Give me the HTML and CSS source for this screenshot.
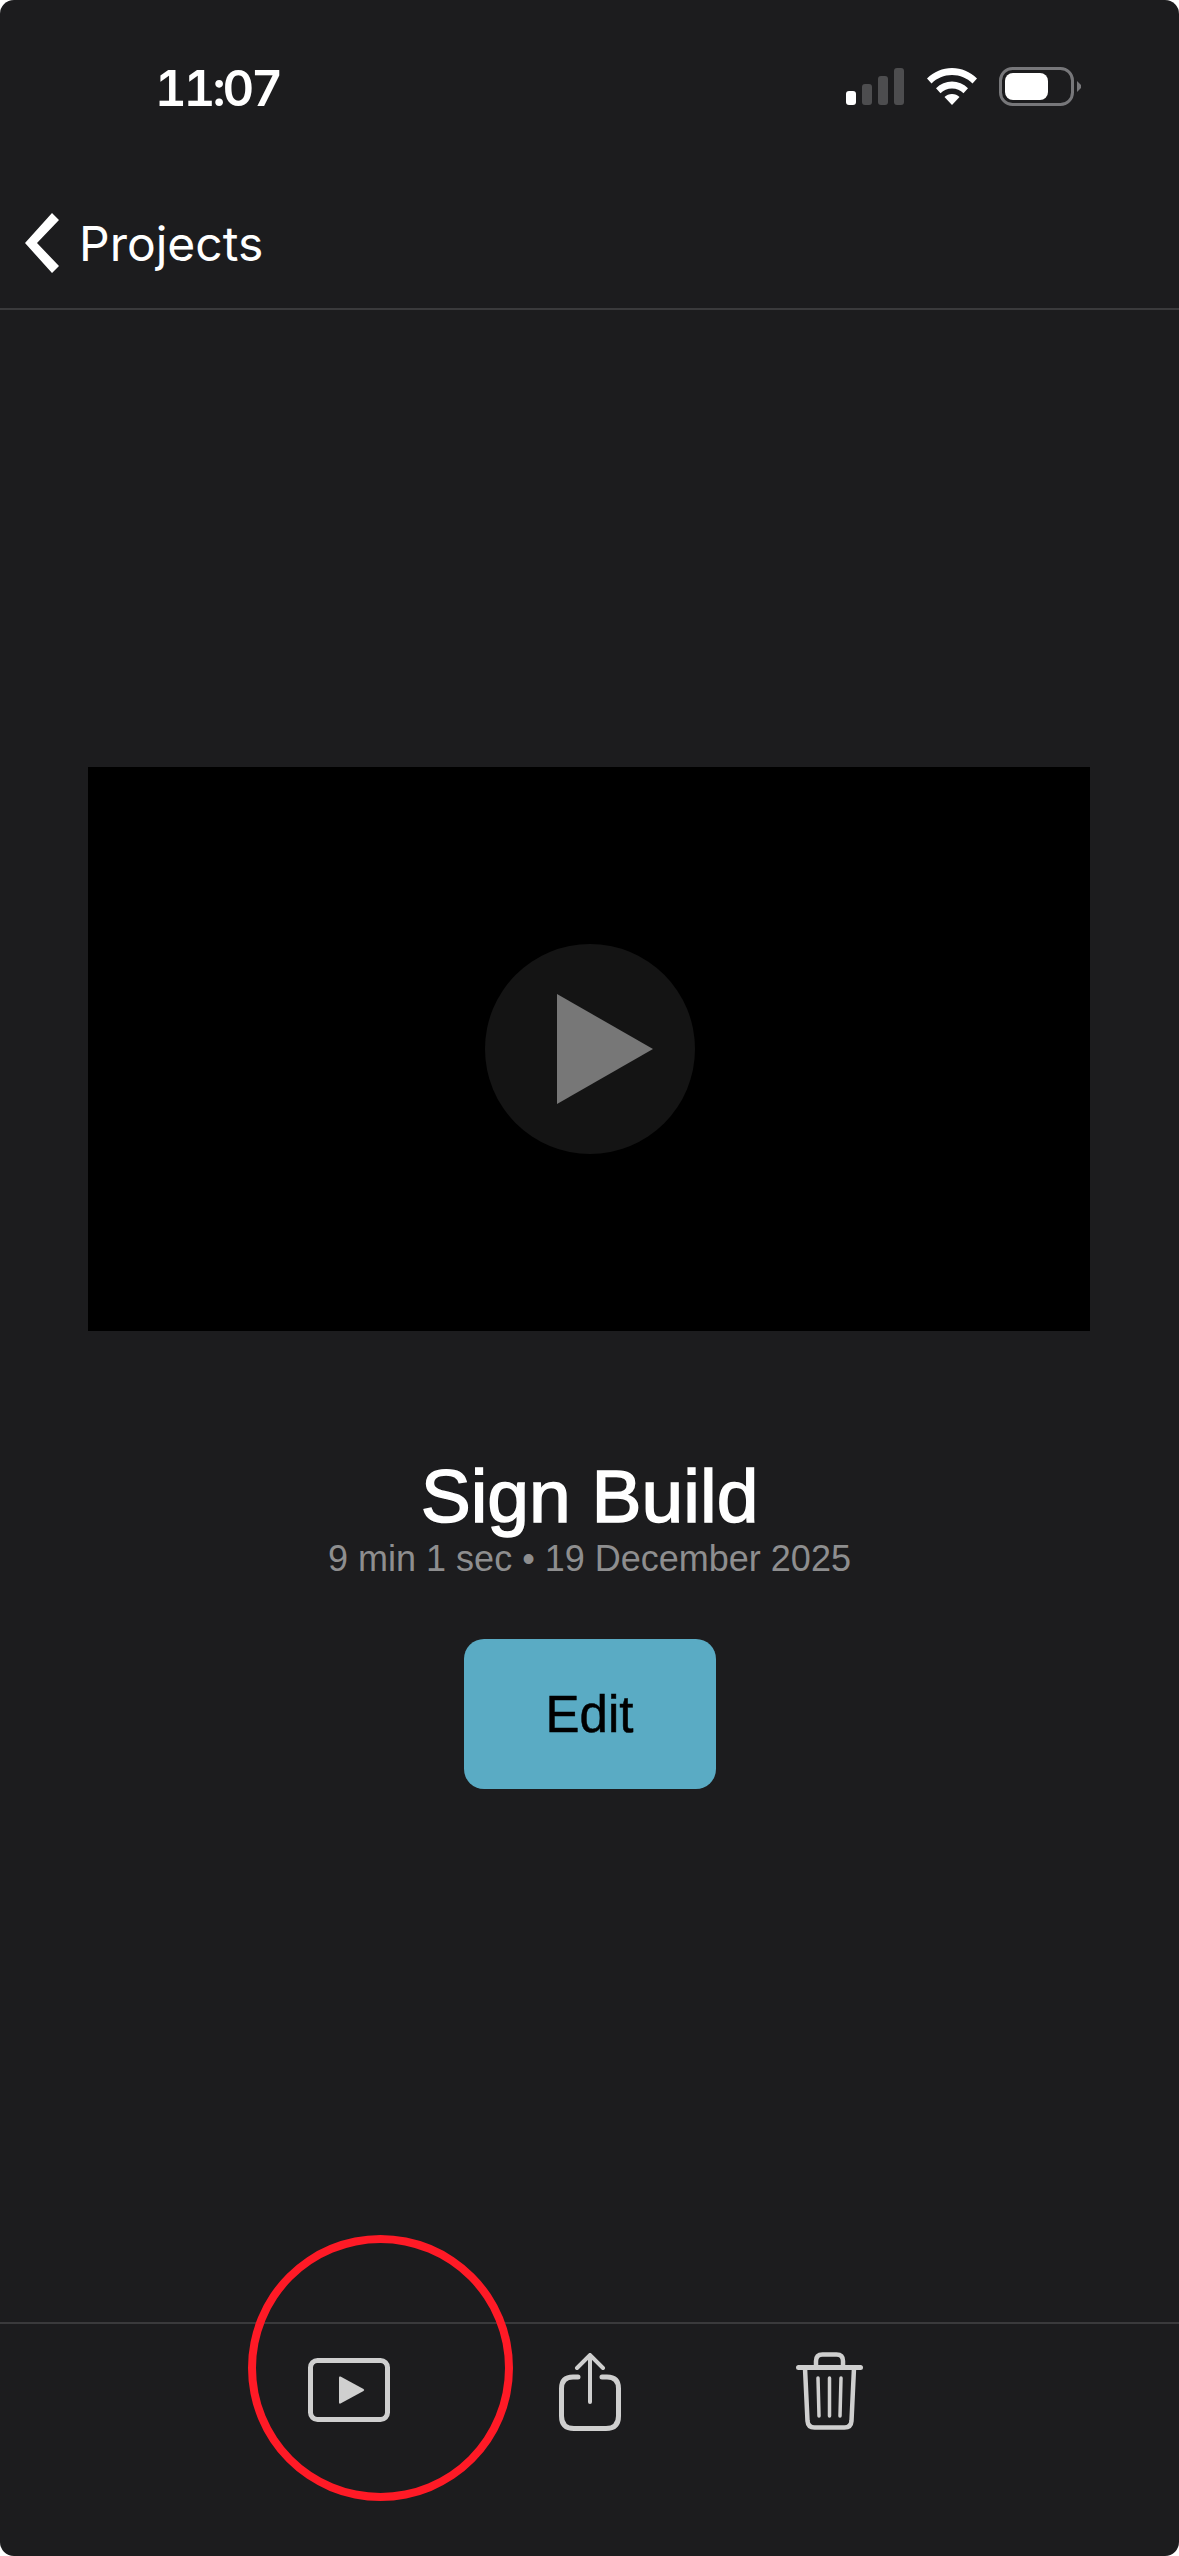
FILE: index.html
```html
<!DOCTYPE html>
<html lang="en">
<head>
  <meta charset="UTF-8">
  <meta name="viewport" content="width=device-width, initial-scale=1.0">
  <title>Sign Build</title>
  <link rel="stylesheet" href="styles.css">
</head>
<body>
  <div class="pantalla">
    <!-- Status bar -->
    <div class="status">
      <span class="hora">11:07</span>
      <div class="status-iconos">
        <svg class="signal" width="58" height="37" viewBox="0 0 58 37">
          <rect x="0" y="23" width="10" height="14" rx="3" fill="#fff"/>
          <rect x="16" y="16" width="10" height="21" rx="3" fill="#4d4d4f"/>
          <rect x="32" y="8" width="10" height="29" rx="3" fill="#4d4d4f"/>
          <rect x="48" y="0" width="10" height="37" rx="3" fill="#4d4d4f"/>
        </svg>
        <svg class="wifi" width="50" height="37" viewBox="0 0 50 37" fill="#fff">
          <path d="M25 0C15.500 0 7 3.600 0 10.500L4.500 15.500C10 10 17 7 25 7C33 7 40 10 45.500 15.500L50 10.500C43 3.600 34.500 0 25 0Z"/>
          <path d="M25 13.500C19 13.500 13.500 15.800 9 20.300L13.500 25.300C16.500 22.300 20.500 20.500 25 20.500C29.500 20.500 33.500 22.300 36.500 25.300L41 20.300C36.500 15.800 31 13.500 25 13.500Z"/>
          <path d="M25 26C22 26 19.500 27 17.500 29L25 37L32.500 29C30.500 27 28 26 25 26Z"/>
        </svg>
        <svg class="bateria" width="82" height="39" viewBox="0 0 82 39">
          <rect x="1.500" y="1.500" width="72" height="36" rx="12" fill="none" stroke="#77777a" stroke-width="3"/>
          <rect x="6" y="6" width="43" height="27" rx="8" fill="#fff"/>
          <path d="M78 14L82 18V21L78 25Z" fill="#77777a"/>
        </svg>
      </div>
    </div>

    <!-- Navigation -->
    <div class="nav">
      <svg class="chevron" width="36" height="60" viewBox="0 0 36 60">
        <path d="M1 30L28 0L35 7L13 30L35 53L28 60Z" fill="#fff"/>
      </svg>
      <span class="nav-titulo">Projects</span>
    </div>

    <div class="contenido">
      <div class="video">
        <div class="play-circulo">
          <svg width="96" height="110" viewBox="0 0 96 110">
            <path d="M0 0L96 55L0 110Z" fill="#777"/>
          </svg>
        </div>
      </div>

      <h1 class="titulo">Sign Build</h1>
      <p class="detalle">9 min 1 sec • 19 December 2025</p>
      <button class="btn-editar">Edit</button>
    </div>

    <!-- Bottom toolbar -->
    <div class="toolbar">
      <svg class="ico-play" width="82" height="64" viewBox="0 0 82 64">
        <rect x="2.500" y="2.500" width="77" height="59" rx="7" fill="none" stroke="#cfcfcf" stroke-width="5"/>
        <path d="M32.500 18.500L55.500 31Q57 32 55.500 33L32.500 45.500Q31 46 31 44.500V19.500Q31 18 32.500 18.500Z" fill="#cfcfcf"/>
      </svg>
      <svg class="ico-share" width="62" height="78" viewBox="0 0 62 78" fill="none" stroke="#cfcfcf" stroke-linecap="round">
        <path d="M19 24H14Q2.500 24 2.500 35.500V63Q2.500 75.500 15 75.500H47Q59.500 75.500 59.500 63V35.500Q59.500 24 48 24H43" stroke-width="5"/>
        <path d="M31 3V49" stroke-width="4"/>
        <path d="M18 15L31 2L44 15" stroke-width="4"/>
      </svg>
      <svg class="ico-trash" width="68" height="78" viewBox="0 0 68 78" fill="none" stroke="#cfcfcf" stroke-linecap="round">
        <path d="M2.500 15.500H64.500" stroke-width="5"/>
        <path d="M20 14V9Q20 2.500 26.500 2.500H40.500Q47 2.500 47 9V14" stroke-width="4.500"/>
        <path d="M9 16L11.500 69Q12 75.500 18.500 75.500H48.500Q55 75.500 55.500 69L58 16" stroke-width="4.500"/>
        <path d="M22 26L23 64M33.500 26V64M45 26L44 64" stroke-width="3.500"/>
      </svg>
    </div>

    <!-- Red marker drawn over the screenshot -->
    <div class="marca"></div>
  </div>
</body>
</html>
```

FILE: styles.css
```css
:root {
  --fondo: #1c1c1e;
  --linea: #3a3a3c;
}
html, body {
  margin: 0;
  padding: 0;
  background: #fff;
}
.pantalla {
  position: relative;
  width: 1179px;
  height: 2556px;
  background: var(--fondo);
  border-radius: 14px;
  overflow: hidden;
  display: flex;
  flex-direction: column;
  font-family: "Liberation Sans", Arial, sans-serif;
  color: #fff;
}
/* Status bar */
.status {
  height: 137px;
  flex: none;
  display: flex;
  justify-content: space-between;
  padding: 60px 98px 0 155px;
  box-sizing: border-box;
}
.hora {
  font-family: Inter, sans-serif;
  font-size: 49px;
  font-weight: 600;
  line-height: 58px;
  font-variant-numeric: tabular-nums;
  letter-spacing: -3px;
}
.status-iconos {
  display: flex;
  align-items: flex-start;
  padding-top: 8px;
}
.wifi {
  margin-left: 23px;
}
.bateria {
  margin-left: 22px;
  margin-top: -1px;
}
/* Navigation */
.nav {
  height: 173px;
  flex: none;
  box-sizing: border-box;
  border-bottom: 2px solid var(--linea);
  display: flex;
  align-items: center;
  padding: 40px 0 0 24px;
}
.chevron {
  flex: none;
}
.nav-titulo {
  font-family: Inter, sans-serif;
  font-size: 48px;
  font-weight: 400;
  margin: 2px 0 0 19px;
}
/* Main content */
.contenido {
  flex: 1;
  display: flex;
  flex-direction: column;
  align-items: center;
  padding-top: 457px;
}
.video {
  width: 1002px;
  height: 564px;
  margin-left: -1px;
  background: #000;
  display: flex;
  align-items: center;
  justify-content: center;
}
.play-circulo {
  width: 210px;
  height: 210px;
  margin-left: 2px;
  border-radius: 50%;
  background: #141414;
  display: flex;
  align-items: center;
  justify-content: center;
}
.play-circulo svg {
  margin-left: 30px;
}
.titulo {
  margin: 123px 0 0;
  font-size: 75px;
  font-weight: 400;
  line-height: 84px;
  -webkit-text-stroke: 1.5px #fff;
}
.detalle {
  margin: 1px 0 0;
  font-size: 36px;
  line-height: 40px;
  color: #8e8e8f;
}
.btn-editar {
  width: 252px;
  height: 150px;
  margin-top: 60px;
  border: none;
  border-radius: 20px;
  background: #5aabc4;
  color: #000;
  font-family: "Liberation Sans", Arial, sans-serif;
  font-size: 51px;
  -webkit-text-stroke: 0.5px #000;
}
/* Toolbar */
.toolbar {
  height: 234px;
  flex: none;
  box-sizing: border-box;
  border-top: 2px solid var(--linea);
  display: flex;
  align-items: flex-start;
  padding: 29px 0 0 308px;
}
.ico-play {
  margin-top: 5px;
}
.ico-share {
  margin-left: 169px;
}
.ico-trash {
  margin-left: 175px;
  margin-top: -1px;
}
.marca {
  position: absolute;
  left: 248px;
  top: 2235px;
  width: 265px;
  height: 266px;
  box-sizing: border-box;
  border: 8px solid #ff1a26;
  border-radius: 50%;
}
```
